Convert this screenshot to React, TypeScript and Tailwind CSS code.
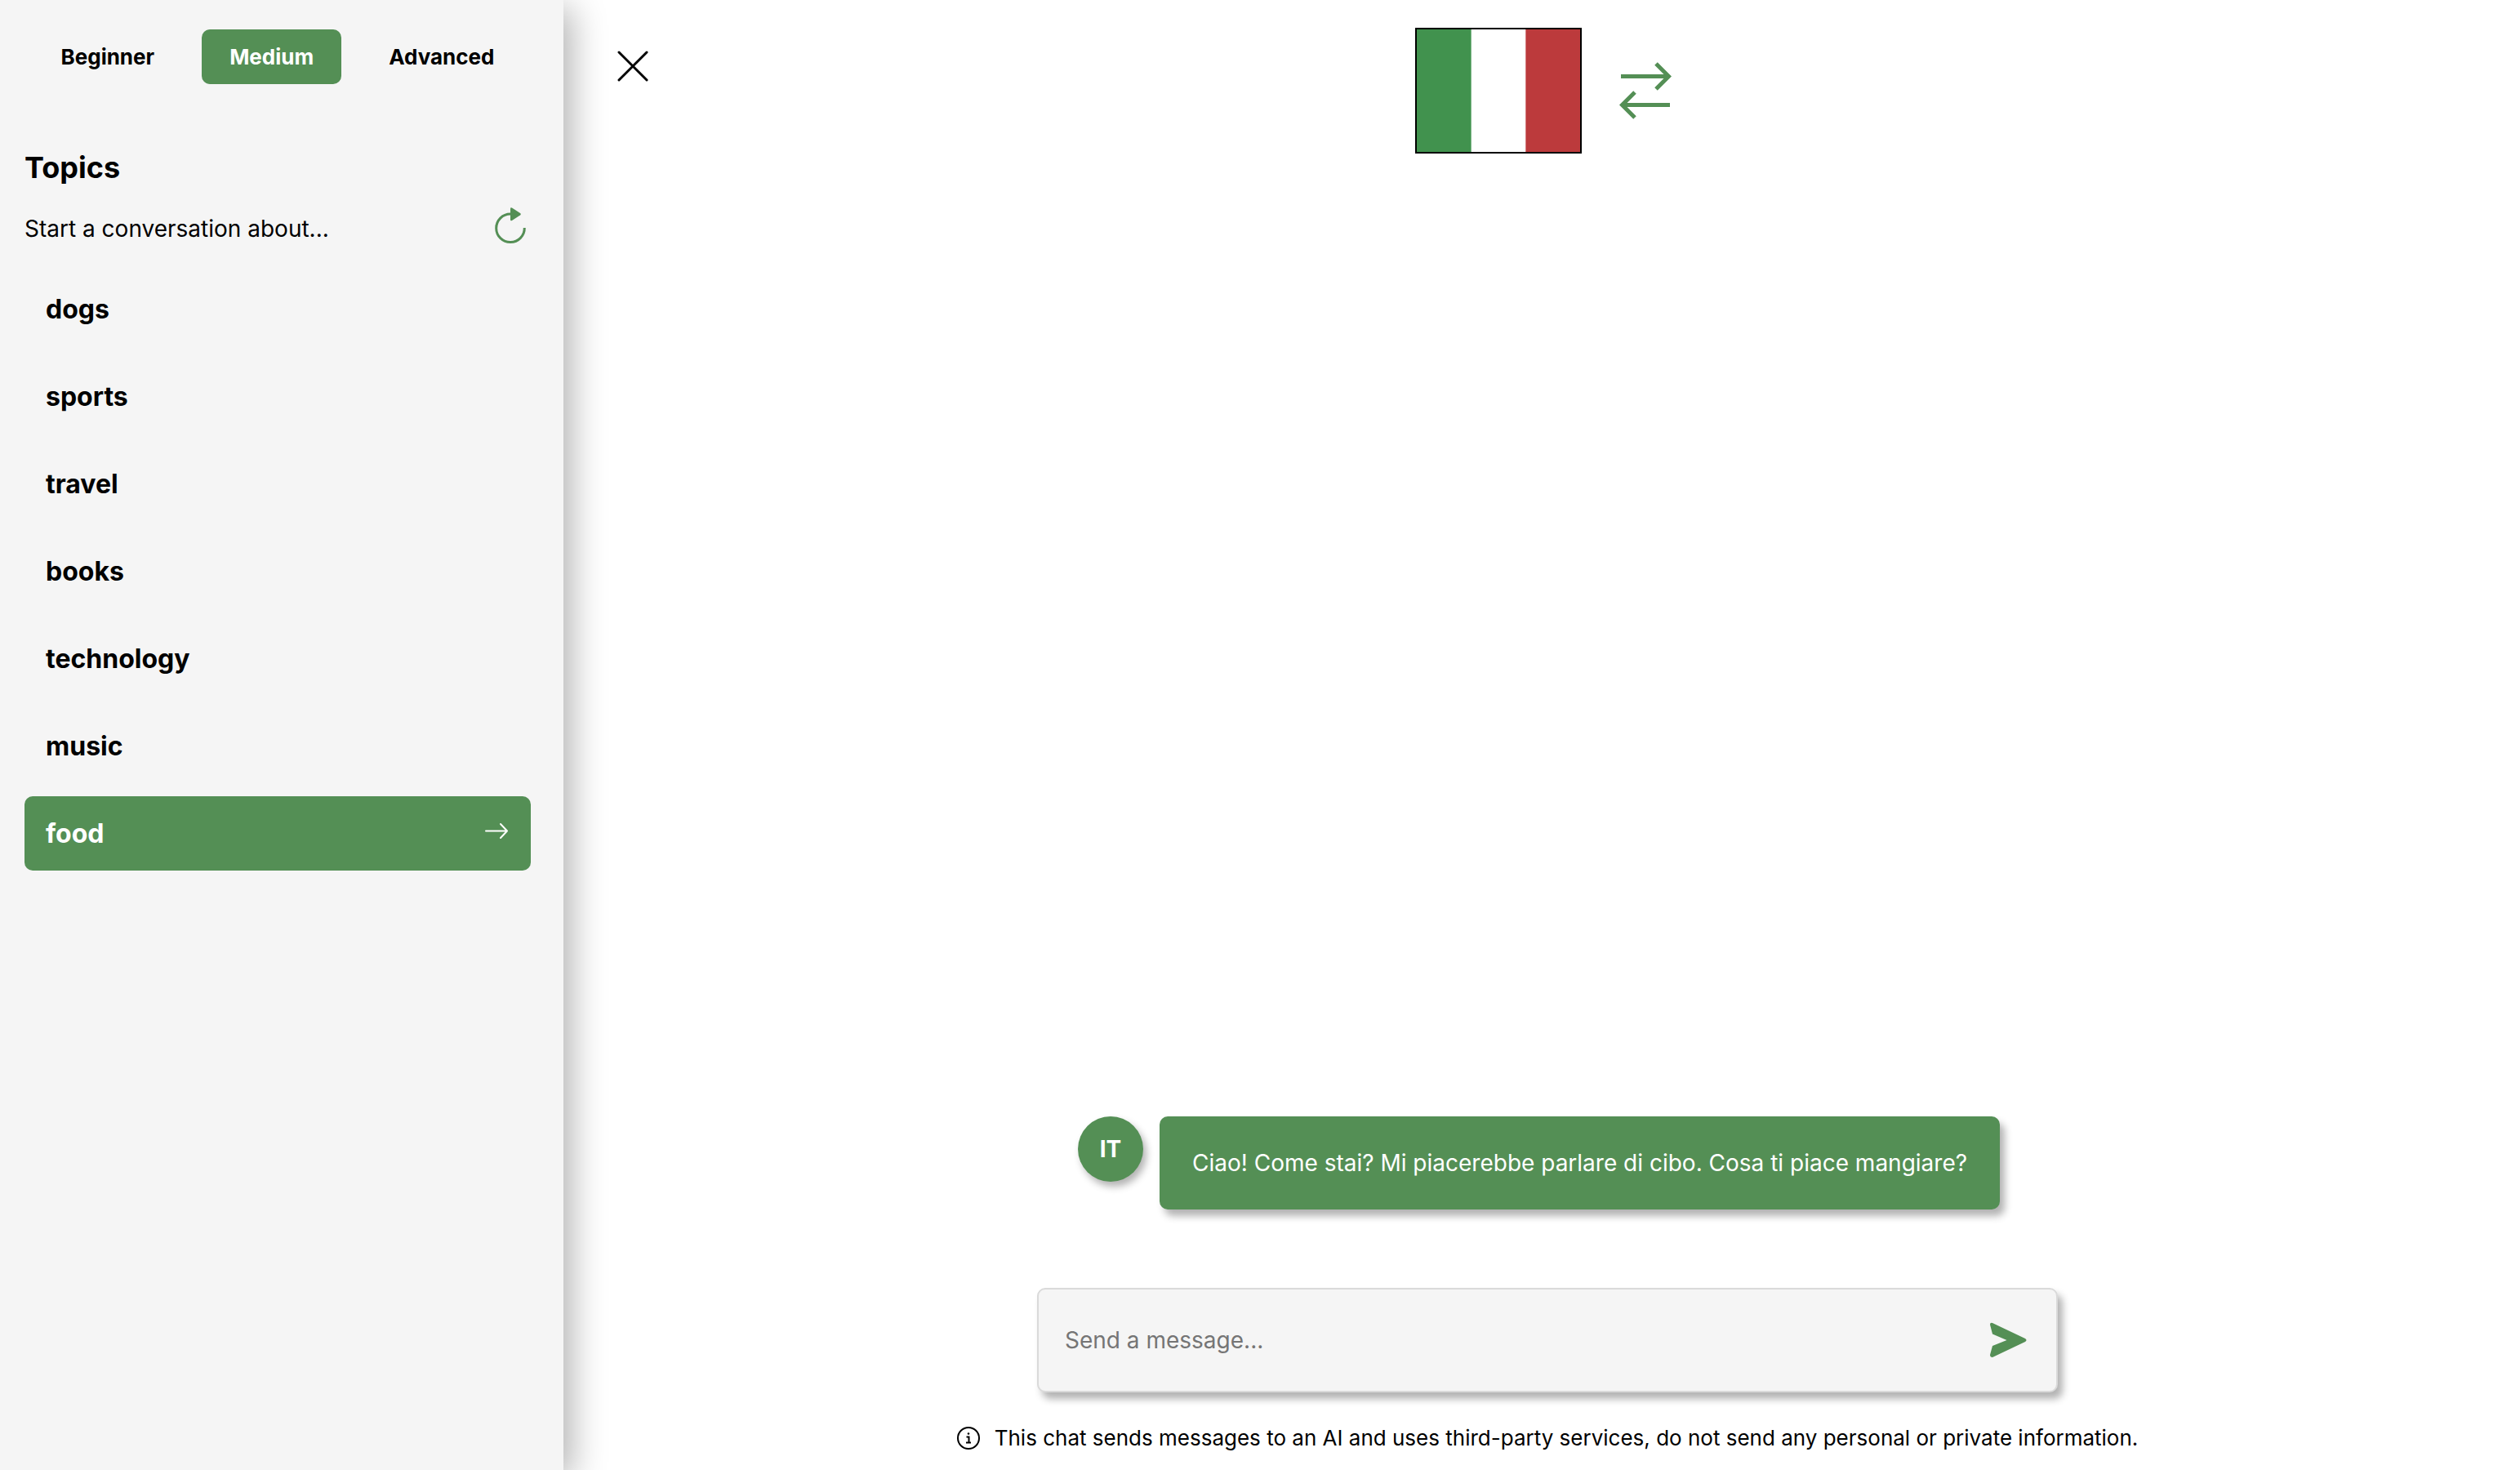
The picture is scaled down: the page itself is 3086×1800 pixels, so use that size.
import { useState } from "react";

const levels = ["Beginner", "Medium", "Advanced"];
const topics = ["dogs", "sports", "travel", "books", "technology", "music", "food"];

function RefreshIcon() {
  return (
    <svg viewBox="0 0 38 46" className="h-[46px] w-[38px]" aria-hidden="true">
      <path d="M19 9A17.300 17.300 0 1 0 36.300 26" fill="none" stroke="#548f55" strokeWidth="3" />
      <path d="M19 2.500Q19 0.500 21 1.500L31 8Q32.500 9.200 31 10.500L21 17Q19 18 19 16Z" fill="#548f55" />
    </svg>
  );
}

function ArrowIcon() {
  return (
    <svg viewBox="0 0 28 20" className="mb-2 h-5 w-7" fill="none" stroke="#fff" strokeWidth="2" strokeLinecap="round" strokeLinejoin="round" aria-hidden="true">
      <path d="M1 10.500H27M19 2L27 10.500L19 19" />
    </svg>
  );
}

function SwapIcon() {
  return (
    <svg viewBox="0 0 64 70" className="h-[70px] w-16" fill="none" stroke="#548f55" strokeWidth="5" aria-hidden="true">
      <path d="M2 17.500H61M45 2L60.500 17.500L45 33M62 52.500H3M19 37L3.500 52.500L19 68" />
    </svg>
  );
}

function SendIcon() {
  return (
    <svg viewBox="0 0 46 44" className="h-11 w-[46px]" aria-hidden="true">
      <path d="M1 3Q1 0 4 1L44 20Q47 22 44 24L4 43Q1 43 1 40L4 29L21.500 22L4 14.500Z" fill="#548f55" />
    </svg>
  );
}

function InfoIcon() {
  return (
    <svg viewBox="0 0 28 28" className="size-7" fill="none" stroke="#000" strokeWidth="2" aria-hidden="true">
      <circle cx="14" cy="14" r="13" />
      <path d="M11.500 12.500H14.500V19.500M11 19.500H17" />
      <circle cx="14" cy="8.500" r="1.300" fill="#000" stroke="none" />
    </svg>
  );
}

export default function App() {
  const [level, setLevel] = useState("Medium");
  const [topic, setTopic] = useState("food");
  return (
    <div className="flex h-screen bg-white font-['Inter',sans-serif] text-black">
      <aside className="z-10 w-[690px] shrink-0 bg-[#f5f5f5] pr-10 pl-[30px] shadow-[10px_10px_40px_rgba(0,0,0,0.3)]">
        <nav className="flex justify-center gap-6 pt-9" aria-label="Level">
          {levels.map((l) => (
            <button
              key={l}
              type="button"
              onClick={() => setLevel(l)}
              className={`rounded-[10px] px-[34px] py-4 text-[26px] leading-[35px] font-bold ${l === level ? "bg-[#548f55] text-white" : ""}`}
            >
              {l}
            </button>
          ))}
        </nav>
        <h3 className="mt-20 text-[36px] leading-[44px] font-bold">Topics</h3>
        <div className="mt-6 flex h-[58px] items-center justify-between pr-[6px]">
          <p className="text-[28px] leading-9">Start a conversation about...</p>
          <button type="button" aria-label="Refresh topics" className="mb-2">
            <RefreshIcon />
          </button>
        </div>
        <ul className="mt-6 flex flex-col gap-4">
          {topics.map((t) => (
            <li key={t}>
              <button
                type="button"
                onClick={() => setTopic(t)}
                className={`flex h-[91px] w-full items-center justify-between rounded-[10px] pr-7 pl-[26px] text-[32px] leading-10 font-bold ${t === topic ? "bg-[#548f55] text-white" : ""}`}
              >
                {t}
                {t === topic && <ArrowIcon />}
              </button>
            </li>
          ))}
        </ul>
      </aside>
      <main className="flex grow flex-col items-center pl-[14px]">
        <header className="grid w-full grid-cols-[1fr_auto_1fr] items-start">
          <button type="button" aria-label="Close sidebar" className="mt-[62px] ml-[52px] w-10">
            <svg viewBox="0 0 38 38" className="size-[38px]" fill="none" stroke="#000" strokeWidth="3" strokeLinecap="round" aria-hidden="true">
              <path d="M2 2L36 36M36 2L2 36" />
            </svg>
          </button>
          <div className="flex items-center gap-[46px] pt-[34px] pr-[10px]">
            <svg viewBox="0 0 204 154" className="h-[154px] w-[204px]" role="img" aria-label="Italian flag">
              <path d="M0 0H204V154H0Z" fill="#000" />
              <path d="M2 2H202V152H2Z" fill="#fff" />
              <path d="M2 2H68.670V152H2Z" fill="#41924e" />
              <path d="M135.330 2H202V152H135.330Z" fill="#bc3a3c" />
            </svg>
            <button type="button" aria-label="Swap language">
              <SwapIcon />
            </button>
          </div>
        </header>
        <section className="mt-auto flex w-full max-w-[1150px] gap-5">
          <div className="grid size-20 shrink-0 place-items-center rounded-full bg-[#548f55] text-[28px] font-bold text-white shadow-[4px_6px_10px_rgba(0,0,0,0.3)]">IT</div>
          <p className="rounded-[10px] bg-[#548f55] px-10 py-[39px] text-[28px] leading-9 text-white shadow-[6px_8px_10px_rgba(0,0,0,0.3)]">
            Ciao! Come stai? Mi piacerebbe parlare di cibo. Cosa ti piace mangiare?
          </p>
        </section>
        <form className="mt-24 flex h-32 w-full max-w-[1250px] items-center rounded-[10px] border-2 border-[#dadada] bg-[#f5f5f5] pr-9 pl-8 shadow-[6px_8px_10px_rgba(0,0,0,0.3)]" onSubmit={(e) => e.preventDefault()}>
          <input aria-label="Message" placeholder="Send a message..." className="h-full grow bg-transparent text-[28px] outline-none placeholder:text-[#757575]" />
          <button type="submit" aria-label="Send">
            <SendIcon />
          </button>
        </form>
        <footer className="mt-[38px] mb-[21px] flex items-center gap-[18px] text-[26px] leading-9">
          <InfoIcon />
          <p>This chat sends messages to an AI and uses third-party services, do not send any personal or private information.</p>
        </footer>
      </main>
    </div>
  );
}
